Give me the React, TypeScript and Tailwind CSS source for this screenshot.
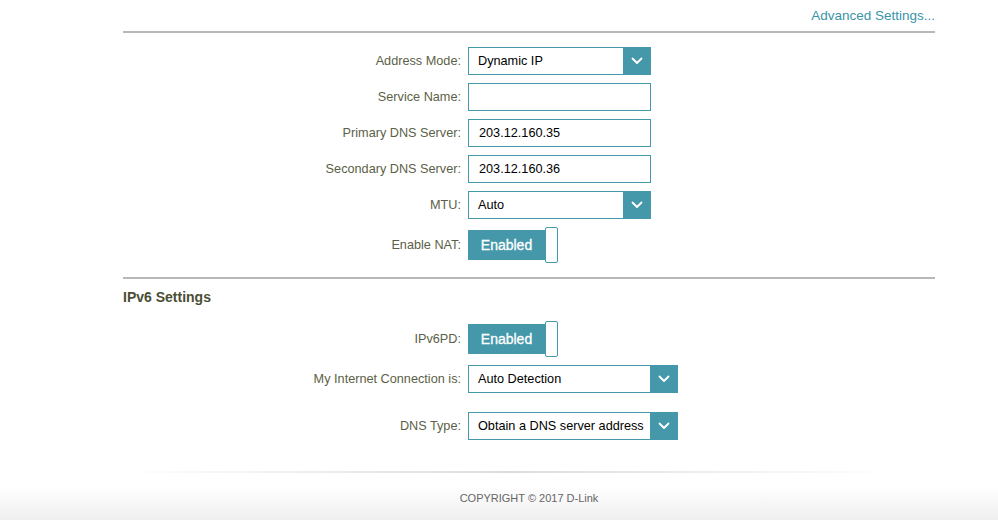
import React from "react";

function Chevron() {
    return (
        <svg width="12" height="8" viewBox="0 0 12 8" fill="none">
            <polyline points="1.5,1.5 6,6 10.5,1.5" stroke="white" strokeWidth="1.8" strokeLinecap="round" strokeLinejoin="round" />
        </svg>
    );
}

function Row({ label, children, className = "" }: { label: string; children: React.ReactNode; className?: string }) {
    return (
        <div className={`flex items-center gap-[7px] ${className}`}>
            <label className="w-[338px] shrink-0 text-right text-[12.7px] pt-[1px] text-[#5c5f47]">{label}</label>
            {children}
        </div>
    );
}

function TextBox({ value = "", width = "w-[183px]" }: { value?: string; width?: string }) {
    return (
        <div className={`${width} h-[28px] border border-[#4598aa] bg-white flex items-center pl-[10px] pt-[1px] text-[12.7px] text-black`}>
            {value}
        </div>
    );
}

function Select({ value, width = "w-[183px]" }: { value: string; width?: string }) {
    return (
        <div className={`${width} h-[28px] border border-[#4598aa] bg-white flex items-stretch`}>
            <div className="flex-1 flex items-center pl-[9px] pt-[1px] text-[12.7px] text-black whitespace-nowrap overflow-hidden">{value}</div>
            <div className="w-[27px] bg-[#4598aa] flex items-center justify-center">
                <Chevron />
            </div>
        </div>
    );
}

function Toggle() {
    return (
        <div className="flex items-center h-[36px]">
            <div className="w-[77px] h-[30px] bg-[#4598aa] text-white text-[14px] flex items-center justify-center [-webkit-text-stroke:0.3px_white]">Enabled</div>
            <div className="w-[13px] h-[36px] border border-[#4598aa] bg-white rounded-[2px]" />
        </div>
    );
}

export default function App() {
    return (
        <div className="min-h-[520px] bg-white font-['Liberation_Sans',Arial,sans-serif] flex flex-col">
            <div className="ml-[123px] w-[812px]">
                {/* top link */}
                <div className="h-[31px] flex justify-end items-center pt-[2px]">
                    <a className="text-[13.5px] text-[#3a94a8]">Advanced Settings...</a>
                </div>
                <div className="h-[2px] bg-[#b8b8b8]" />

                {/* IPv4 form */}
                <div className="mt-[14px] flex flex-col gap-[8px]">
                    <Row label="Address Mode:"><Select value="Dynamic IP" /></Row>
                    <Row label="Service Name:"><TextBox /></Row>
                    <Row label="Primary DNS Server:"><TextBox value="203.12.160.35" /></Row>
                    <Row label="Secondary DNS Server:"><TextBox value="203.12.160.36" /></Row>
                    <Row label="MTU:"><Select value="Auto" /></Row>
                    <Row label="Enable NAT:"><Toggle /></Row>
                </div>

                <div className="mt-[14px] h-[2px] bg-[#b8b8b8]" />

                {/* IPv6 */}
                <h3 className="mt-[10px] h-[16px] leading-[16px] text-[14px] font-bold text-[#4a4e34]">IPv6 Settings</h3>
                <div className="mt-[16px] flex flex-col">
                    <Row label="IPv6PD:"><Toggle /></Row>
                    <Row label="My Internet Connection is:" className="mt-[8px]">
                        <Select value="Auto Detection" width="w-[210px]" />
                    </Row>
                    <Row label="DNS Type:" className="mt-[19px]">
                        <Select value="Obtain a DNS server address" width="w-[210px]" />
                    </Row>
                </div>
            </div>

            {/* footer */}
            <div className="mt-[31px] flex-1 bg-gradient-to-b from-white from-30% to-[#efefef]">
                <div className="ml-[123px] w-[770px] h-[2px] bg-gradient-to-r from-transparent via-[#dcdcdc] to-transparent" />
                <div className="ml-[123px] w-[812px] text-center text-[11px] text-[#666] pt-[17px]">
                    COPYRIGHT © 2017 D-Link
                </div>
            </div>
        </div>
    );
}
